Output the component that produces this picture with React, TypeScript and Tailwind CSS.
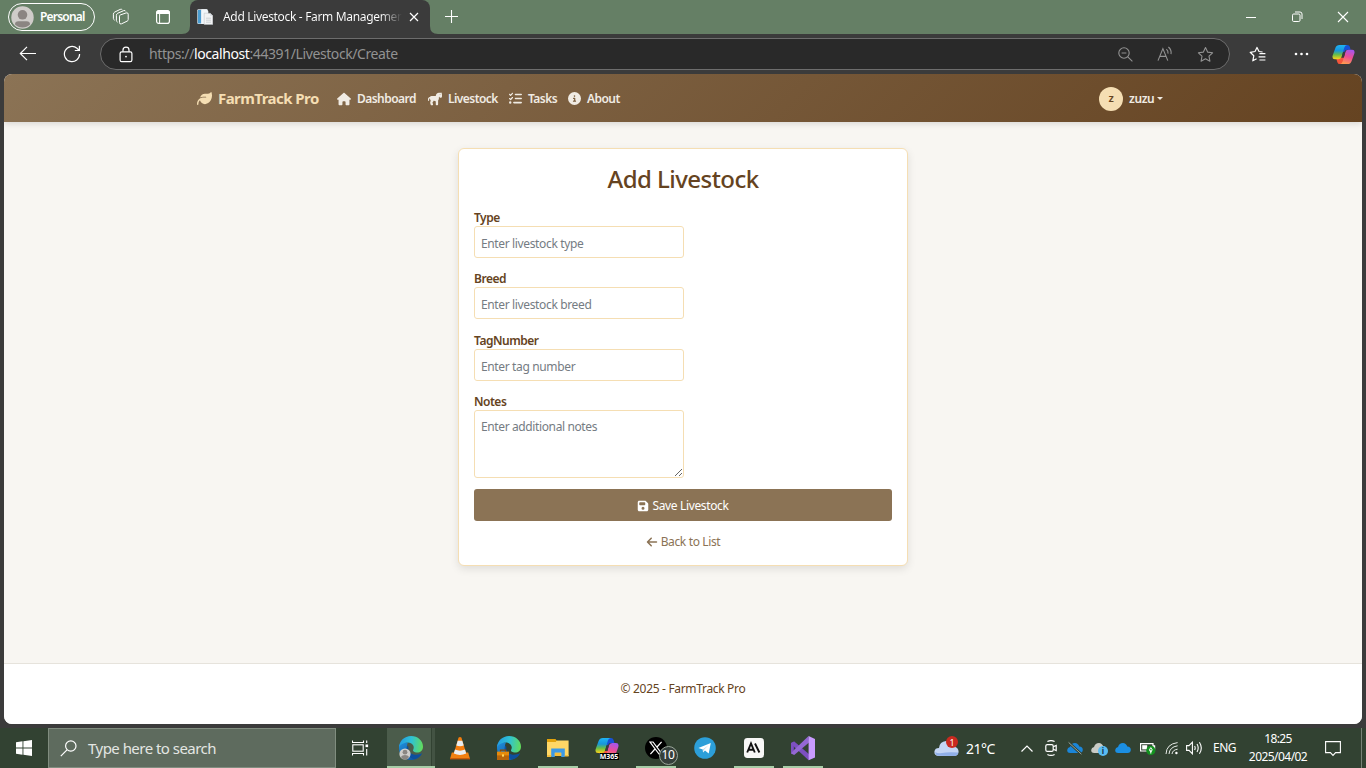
import React from "react";
import {
  FaArrowLeft,
  FaCircleInfo,
  FaFloppyDisk,
  FaHorse,
  FaHouse,
  FaLeaf,
  FaListCheck,
} from "react-icons/fa6";

type IconProps = { className?: string };

function WorkspacesIcon() {
  return (
    <svg width="18" height="18" viewBox="0 0 18 18" fill="none" stroke="#fff" strokeWidth="1" strokeLinejoin="round">
      <path d="M7.5 8.2 Q7.5 7.3 8.4 6.9 L14.2 4.9 Q16.2 4.4 16.2 6.2 V11.6 Q16.2 12.7 15.2 13.1 L9.6 15.8 Q7.5 16.6 7.5 14.6 Z" />
      <path d="M5.6 14.2 Q4.4 13.6 4.4 12.4 V7.4 Q4.4 5.9 5.8 5.2 L11.8 2.6 Q13.3 2.2 13.8 3.4" />
      <path d="M2.6 12.2 Q1.4 11.6 1.4 10.4 V6.2 Q1.4 4.7 2.8 4 L8.2 1.4 Q9.6 .9 10.3 1.8" />
    </svg>
  );
}

function VerticalTabsIcon() {
  return (
    <svg width="16" height="16" viewBox="0 0 16 16" fill="none" stroke="#fff" strokeWidth="1.2">
      <rect x="1.6" y="1.6" width="12.8" height="12.8" rx="2.2" />
      <path d="M1.8 4.3 V3.8 Q1.8 1.8 3.8 1.8 H12.2 Q14.2 1.8 14.2 3.8 V4.3 Z" fill="#fff" />
      <path d="M4.6 4.5 V14.2" strokeWidth="1" />
    </svg>
  );
}

function FaviconIcon() {
  return (
    <svg width="16" height="16" viewBox="0 0 16 16">
      <path d="M.3 1.2 Q.3 .2 1.3 .2 H10.5 V15 H1.3 Q.3 15 .3 14 Z" fill="#dfeaf2" />
      <rect x=".9" y="1" width="3.4" height="13.4" fill="#4b9cd0" />
      <path d="M4.3 .2 H9.5 L11.3 2 V15 H4.3 Z" fill="#f2f6f9" />
      <path d="M7.2 4.2 H13.2 L15.8 6.8 V15.6 H7.2 Z" fill="#f2f3f4" stroke="#b9bfc5" strokeWidth=".5" />
      <path d="M9 9.2 H14 M9 11.2 H14 M9 13.2 H14" stroke="#c4c9ce" strokeWidth=".8" />
      <path d="M13 4.2 V7 H15.8" fill="#dce0e4" />
    </svg>
  );
}

const STAR = "M8.5 1.6 L10.6 6.1 L15.6 6.8 L12 10.2 L12.9 15.2 L8.5 12.8 L4.1 15.2 L5 10.2 L1.4 6.8 L6.4 6.1 Z";

function CopilotIcon({ className }: IconProps) {
  return (
    <svg className={className} viewBox="0 0 24 24">
      <defs>
        <linearGradient id="cpA" x1=".3" y1="0" x2=".3" y2="1">
          <stop offset="0" stopColor="#1fb4f4" />
          <stop offset=".4" stopColor="#1796dc" />
          <stop offset=".68" stopColor="#69bd45" />
          <stop offset="1" stopColor="#ffd31a" />
        </linearGradient>
        <linearGradient id="cpB" x1=".7" y1="0" x2=".4" y2="1">
          <stop offset="0" stopColor="#a455ee" />
          <stop offset=".5" stopColor="#ec4d94" />
          <stop offset="1" stopColor="#ff9a50" />
        </linearGradient>
      </defs>
      <path d="M13 2 H16 Q18 2 18.6 4 L19.4 7 H16 Q13.6 7 12.8 9.4 L10.8 9 Z" fill="#1750d8" />
      <path d="M4.5 16.5 L5.6 20 Q6.2 22 8.2 22 H11 Q12.6 22 13.2 20 L14.2 15 L10 15 Z" fill="#f4553b" />
      <path d="M7.8 2 H15.6 Q13.6 2.3 12.9 4.6 L10.1 14.4 Q9.3 17 6.8 17 H3 Q-.3 17 .7 13 L3.6 5 Q4.7 2 7.8 2 Z" fill="url(#cpA)" />
      <path d="M16.2 22 H8.4 Q10.4 21.7 11.1 19.4 L13.9 9.6 Q14.7 7 17.2 7 H21 Q24.3 7 23.3 11 L20.4 19 Q19.3 22 16.2 22 Z" fill="url(#cpB)" />
      <path d="M13.9 9.6 L12.4 15 H10 L11.6 9.4 Z" fill="#3b3b3b" />
    </svg>
  );
}

function EdgeIcon({ badge }: { badge: "profile" | "work" }) {
  return (
    <svg className="size-7" viewBox="0 0 28 28">
      <defs>
        <linearGradient id="edA" x1="0" y1=".4" x2="1" y2=".5">
          <stop offset="0" stopColor="#229be4" />
          <stop offset=".5" stopColor="#2fc2d4" />
          <stop offset="1" stopColor="#62dc5c" />
        </linearGradient>
        <linearGradient id="edB" x1="0" y1="0" x2="1" y2="1">
          <stop offset="0" stopColor="#2090dc" />
          <stop offset="1" stopColor="#0b4a98" />
        </linearGradient>
      </defs>
      <path d="M2 14 C2 8 6 7 11 8.6 C9 12 10 17 13.6 19.4 C17.4 21.8 21.6 21 25 19.2 C22.8 23.6 18.6 26 14 26 C7 26 2 21 2 14 Z" fill="url(#edB)" />
      <path d="M10 12 C8.4 17.5 11.4 24.6 18 25.3 C21 24.2 23.6 22 25 19.2 C21.6 21 17.4 21.8 13.8 19.2 C11.8 17.6 11 15.4 11.4 12.6 Z" fill="#0d4f9e" />
      <path d="M2 13.6 C2.2 7 7.4 2 14 2 C21 2 26 7 26 12.4 C26 17 22.5 19 19 18.4 C16.6 18 15.4 17 16.2 15.8 C18 12.6 15.5 8.6 10.8 8.6 C6.4 8.6 3 11 2 13.6 Z" fill="url(#edA)" />
      {badge === "profile" ? (
        <g>
          <circle cx="8" cy="20" r="5.6" fill="#cfcdcb" />
          <circle cx="8" cy="18.2" r="2.4" fill="#8a8683" />
          <path d="M3.9 23 Q5 21 8 21 T12.1 23 Q10.5 25.6 8 25.6 T3.9 23 Z" fill="#8a8683" />
        </g>
      ) : (
        <g>
          <path d="M5.5 18 V16.2 H10.5 V18" fill="none" stroke="#8a4a05" strokeWidth="1.2" />
          <rect x="2" y="17.6" width="12" height="8.4" fill="#e58a0b" />
          <rect x="2" y="21.4" width="12" height="4.6" fill="#b8650a" />
          <rect x="7" y="20.4" width="2" height="2.2" fill="#ffd65a" />
        </g>
      )}
    </svg>
  );
}

function VlcIcon() {
  return (
    <svg className="size-7" viewBox="0 0 28 28">
      <path d="M5.8 18.5 H22.2 L24 25 H4 Z" fill="#f08010" />
      <path d="M4 24 H24 V25.4 H4 Z" fill="#c95a06" />
      <path d="M12.6 3.5 Q14 2.6 15.4 3.5 L20.4 20 Q18 22.2 14 22.2 T7.6 20 Z" fill="#f47d0e" />
      <path d="M11.7 6.8 H16.3 L17.7 11.4 Q14 13 10.3 11.4 Z" fill="#e9edef" />
      <path d="M9 15.6 Q14 17.8 19 15.6 L20.2 19.6 Q14 22.2 7.8 19.6 Z" fill="#e9edef" />
    </svg>
  );
}

function ExplorerIcon() {
  return (
    <svg className="size-7" viewBox="0 0 28 28">
      <path d="M3 5 H11 L13.2 7.2 H3 Z" fill="#dd9a06" />
      <path d="M3 7.4 H11.4 L13 6.4 H24.6 V22 H3 Z" fill="#ffd766" />
      <path d="M3 5 H11.2 L12.8 6.4 L11.4 8 H3 Z" fill="#e3a30c" />
      <path d="M7.2 14.6 H20.8 V23 H17.2 V18.8 H10.8 V23 H7.2 Z" fill="#3b99e6" />
      <path d="M3 21 H7.2 V23 H3 Z M10.8 18.8 H17.2 V22 H10.8 Z M20.8 21 H24.6 V22.4 H20.8 Z" fill="#f4be3d" />
    </svg>
  );
}

function VisualStudioIcon() {
  return (
    <svg className="size-7" viewBox="0 0 28 28">
      <path fillRule="evenodd" d="M2 9 L5 7.6 L20 20 V26 L5.2 13 L4.6 17.4 L2 19 Z" fill="#6a3fb0" />
      <path d="M2 9 L5.2 7.6 L19.8 20.4 L19.6 26.2 L4.4 11.8 V16.4 L2 19 Z" fill="#7d50c0" />
      <path d="M2 19 L4.4 16.4 L19.6 2 L20 8.6 L5.2 21 L2 19.6 Z" fill="#9468d4" />
      <path d="M19.6 2 L26 5 V23.6 L19.6 26.2 V2 Z" fill="#c99bff" />
    </svg>
  );
}

function TaskSlot({ active, children }: { active?: boolean; children: React.ReactNode }) {
  return (
    <div className="flex w-[49px] justify-center">
      <div
        className={
          active
            ? "flex h-10 w-10 items-center justify-center border-b-2 border-[#a7cda7] pt-0.5"
            : "flex h-10 w-10 items-center justify-center"
        }
      >
        {children}
      </div>
    </div>
  );
}

function Cloud({ fill, className }: { fill: string; className?: string }) {
  return (
    <svg className={className} viewBox="0 0 16 11">
      <path d="M3.2 10.5 Q0 10.3 .2 7.4 Q.5 5 3 4.6 Q4.2 .6 8 .6 Q11 .7 12.3 4 Q15.8 4.4 15.8 7.4 Q15.6 10.4 12.6 10.5 Z" fill={fill} />
    </svg>
  );
}

function TabBar() {
  return (
    <header className="flex h-[34px] bg-[#657f65] text-white">
      <div className="flex w-[190px] items-center pl-2">
        <div className="flex h-[28px] w-[87px] items-center rounded-full border border-white pl-0.5">
          <svg className="size-[23px]" viewBox="0 0 23 23">
            <circle cx="11.5" cy="11.5" r="11.2" fill="#cfccc9" />
            <circle cx="11.5" cy="8.8" r="4.8" fill="#8b8582" />
            <path d="M4 18.4 Q4 15.2 7.4 15.2 H15.6 Q19 15.2 19 18.4 Q16 21.4 11.5 21.4 T4 18.4 Z" fill="#8b8582" />
          </svg>
          <span className="ml-[6px] text-[12px] font-semibold tracking-[-0.8px]">Personal</span>
        </div>
        <div className="ml-[17px] flex">
          <WorkspacesIcon />
        </div>
        <div className="ml-[25px]">
          <VerticalTabsIcon />
        </div>
      </div>
      <div className="relative flex w-[240px] items-center rounded-t-lg bg-[#3b3b3b] pl-[7px]">
        <svg className="absolute bottom-0 -left-2 size-2" viewBox="0 0 8 8">
          <path d="M8 0 V8 H0 Q8 8 8 0 Z" fill="#3b3b3b" />
        </svg>
        <svg className="absolute -right-2 bottom-0 size-2" viewBox="0 0 8 8">
          <path d="M0 0 V8 H8 Q0 8 0 0 Z" fill="#3b3b3b" />
        </svg>
        <FaviconIcon />
        <span className="ml-[10px] w-[179px] overflow-hidden bg-linear-to-r from-white from-88% to-transparent bg-clip-text text-[12px] tracking-[-0.33px] whitespace-nowrap text-transparent">
          Add Livestock - Farm Management
        </span>
        <svg className="ml-[7px] size-[10px]" viewBox="0 0 10 10" stroke="#fff" strokeWidth="1.2">
          <path d="M1 1 L9 9 M9 1 L1 9" />
        </svg>
      </div>
      <div className="flex flex-1 items-center pl-[15px]">
        <svg className="size-[14px]" viewBox="0 0 14 14" stroke="#fff" strokeWidth="1.1">
          <path d="M6.5 0 V13 M0 6.5 H13" />
        </svg>
      </div>
      <div className="flex w-[138px] items-center justify-around">
        <svg className="size-[12px]" viewBox="0 0 12 12" stroke="#fff">
          <path d="M1 6.5 H11" />
        </svg>
        <svg className="size-[12px]" viewBox="0 0 12 12" stroke="#fff" fill="none">
          <rect x="1.5" y="3" width="7.5" height="7.5" rx="1.2" />
          <path d="M4 1 H9 Q11 1 11 3 V8" />
        </svg>
        <svg className="size-[12px]" viewBox="0 0 12 12" stroke="#fff" strokeWidth="1.1">
          <path d="M1 1 L11 11 M11 1 L1 11" />
        </svg>
      </div>
    </header>
  );
}

function Toolbar() {
  return (
    <div className="flex h-10 items-center bg-[#3b3b3b] pl-[19px]">
      <svg width="18" height="16" viewBox="0 0 18 16" fill="none" stroke="#fff" strokeWidth="1.2">
        <path d="M17 7.5 H1.4 M8 .8 L1.3 7.5 L8 14.2" />
      </svg>
      <svg className="ml-[26px]" width="18" height="18" viewBox="0 0 18 18" fill="none" stroke="#fff" strokeWidth="1.2">
        <path d="M16.6 9 A7.6 7.6 0 1 1 14 3.3 L16 5.2 M16.4 .8 V5.5 H11.8" />
      </svg>
      <div className="ml-[19px] flex h-8 w-[1130px] items-center rounded-full border border-[#6d6d6d] bg-[#292929]">
        <svg className="ml-[18px]" width="14" height="17" viewBox="0 0 14 17" fill="none" stroke="#fff" strokeWidth="1.2">
          <rect x="1.1" y="5.8" width="11.8" height="9.8" rx="1.6" />
          <path d="M4 5.8 V4 Q4 1.2 7 1.2 T10 4 V5.8" />
          <circle cx="7" cy="10.6" r=".9" fill="#fff" stroke="none" />
        </svg>
        <div className="ml-4 flex-1 pb-px text-[14px] tracking-[-0.41px] whitespace-nowrap text-[#929292]">
          https://<span className="text-white">localhost</span>:44391/Livestock/Create
        </div>
        <div className="flex w-24 items-center justify-between">
          <svg width="15" height="15" viewBox="0 0 15 15" fill="none" stroke="#929292" strokeWidth="1.1">
            <circle cx="6" cy="6" r="5.2" />
            <path d="M9.8 9.8 L14.4 14.4 M3.6 6 H8.4" />
          </svg>
          <svg width="17" height="16" viewBox="0 0 17 16" fill="none" stroke="#929292" strokeWidth="1.1">
            <path d="M1 14.6 L5.9 2.6 L10.8 14.6 M2.8 10.4 H9 M9.4 3.2 Q11.4 5 11 7.6 M11.4 1 Q14.8 3.8 14 8.2" />
          </svg>
          <svg width="17" height="17" viewBox="0 0 17 17" fill="none" stroke="#929292" strokeWidth="1.1" strokeLinejoin="round">
            <path d={STAR} />
          </svg>
        </div>
        <div className="w-[15px]" />
      </div>
      <svg className="ml-[19px]" width="17" height="17" viewBox="0 0 17 17" fill="none" stroke="#fff" strokeWidth="1.2" strokeLinejoin="round">
        <path d="M13.6 6 L10 5.5 L8 1.4 L6 5.5 L1.2 6.3 L4.8 9.8 L3.8 14.8 L7.6 12.8 M10.4 7.6 H16.4 M9.6 10.8 H16.4 M10.4 14 H16.4" />
      </svg>
      <svg className="ml-[28px]" width="15" height="4" viewBox="0 0 15 4" fill="#fff">
        <circle cx="2" cy="2" r="1.3" />
        <circle cx="7.5" cy="2" r="1.3" />
        <circle cx="13" cy="2" r="1.3" />
      </svg>
      <CopilotIcon className="ml-[23px] size-[23px]" />
    </div>
  );
}

function Navbar() {
  return (
    <nav className="relative flex h-12 items-center bg-linear-135 from-[#8b7355] to-[#654321] pt-px pl-[193px] text-[12px] font-semibold tracking-[-0.55px] text-[#f0ebe3] shadow-[0_2px_6px_rgba(0,0,0,0.12)]">
      <a className="flex w-[140px] items-center text-[15px] font-bold text-[#f5deb3]">
        <FaLeaf className="size-[15px]" />
        <span className="ml-[6px] pb-px">FarmTrack Pro</span>
      </a>
      <a className="flex w-[91px] items-center">
        <FaHouse className="size-[14px]" />
        <span className="ml-[6px]">Dashboard</span>
      </a>
      <a className="flex w-[81px] items-center">
        <FaHorse className="size-[14px]" />
        <span className="ml-[6px]">Livestock</span>
      </a>
      <a className="flex w-[59px] items-center">
        <FaListCheck className="size-[13px]" />
        <span className="ml-[6px]">Tasks</span>
      </a>
      <a className="flex flex-1 items-center">
        <FaCircleInfo className="size-[13px]" />
        <span className="ml-[6px]">About</span>
      </a>
      <div className="flex w-[263px] items-center">
        <span className="flex size-6 items-center justify-center rounded-full bg-[#f5deb3] text-[11px] text-[#654321]">z</span>
        <span className="ml-[6px] tracking-[-0.4px]">zuzu</span>
        <svg className="ml-[3px]" width="6" height="3" viewBox="0 0 6 3">
          <path d="M0 0 H6 L3 3 Z" fill="#f0ebe3" />
        </svg>
      </div>
    </nav>
  );
}

const inputClass =
  "block h-8 w-[210px] rounded-[3px] border border-[#f5deb3] bg-white px-1.5 pt-0.5 text-[12px] tracking-[-0.36px] outline-none placeholder:text-[#757c83]";

function Field({ label, placeholder, className }: { label: string; placeholder: string; className: string }) {
  return (
    <div className={className}>
      <label className="block h-[17px] text-[12px] leading-[17px] font-semibold tracking-[-0.48px]">{label}</label>
      <input className={inputClass} placeholder={placeholder} />
    </div>
  );
}

function AppPage() {
  return (
    <div className="flex h-[654px] flex-col bg-[#3b3b3b] px-1 pb-1">
      <div className="flex flex-1 flex-col overflow-hidden rounded-lg bg-[#f8f6f2] text-[#654321]">
        <Navbar />
        <main className="flex flex-1 justify-center pt-[26px]">
          <section className="h-[418px] w-[450px] rounded-md border border-[#f5deb3] bg-white px-[15px] shadow-[0_3px_9px_rgba(0,0,0,0.1)]">
            <h1 className="mt-[14px] mb-[15px] h-[31px] text-center text-[24px] leading-[31px] font-medium tracking-[-0.55px]">Add Livestock</h1>
            <Field className="h-[61px]" label="Type" placeholder="Enter livestock type" />
            <Field className="h-[62px]" label="Breed" placeholder="Enter livestock breed" />
            <Field className="h-[61px]" label="TagNumber" placeholder="Enter tag number" />
            <label className="block h-[17px] text-[12px] leading-[17px] font-semibold tracking-[-0.48px]">Notes</label>
            <textarea
              className="block h-[68px] w-[210px] rounded-[3px] border border-[#f5deb3] bg-white px-1.5 pt-[7px] text-[12px] leading-[18px] tracking-[-0.38px] outline-none placeholder:text-[#757c83]"
              placeholder="Enter additional notes"
            />
            <button className="mt-[11px] flex h-8 w-full items-center justify-center rounded-[3px] bg-[#8b7355] pt-0.5 text-[12px] tracking-[-0.36px] text-white">
              <FaFloppyDisk className="mr-[3px] size-[12px]" />
              Save Livestock
            </button>
            <a className="mt-[12px] flex h-[18px] items-center justify-center text-[12px] tracking-[-0.36px] text-[#8b7355]">
              <FaArrowLeft className="mr-[3px] size-[12px]" />
              Back to List
            </a>
          </section>
        </main>
        <footer className="flex h-[61px] justify-center border-t border-[#e6e3dc] bg-white pt-4 text-[12px] leading-[18px] tracking-[-0.32px]">
          © 2025 - FarmTrack Pro
        </footer>
      </div>
    </div>
  );
}

function Taskbar() {
  return (
    <footer className="flex h-10 items-center bg-[#324232] text-white">
      <div className="flex w-12 justify-center">
        <svg width="16" height="16" viewBox="0 0 16 16" fill="#fff">
          <path d="M0 2.2 L6.5 1.3 V7.5 H0 Z M7.4 1.2 L16 0 V7.5 H7.4 Z M0 8.4 H6.5 V14.7 L0 13.8 Z M7.4 8.4 H16 V16 L7.4 14.8 Z" />
        </svg>
      </div>
      <div className="flex h-10 w-[288px] items-center border border-[#808d7f] bg-[#5e6b5e] pl-[11px] text-[15px] tracking-[-0.53px] text-[#e3e6e3]">
        <svg width="17" height="17" viewBox="0 0 17 17" fill="none" stroke="#fff" strokeWidth="1.2">
          <circle cx="10.8" cy="6" r="5.2" />
          <path d="M7 9.8 L.8 16.2" />
        </svg>
        <span className="ml-[11px]">Type here to search</span>
      </div>
      <div className="flex w-[51px] justify-center pr-0.5">
        <svg width="17" height="16" viewBox="0 0 17 16" fill="none" stroke="#fff" strokeWidth="1.1">
          <path d="M.5 .5 V2.5 H11.5 V.5 M.5 15.5 V13.5 H11.5 V15.5 M14.7 .5 V3 M14.7 9 V15.5" />
          <rect x=".8" y="4.8" width="10.4" height="6.4" />
          <rect x="13.5" y="4.5" width="2.6" height="2.6" fill="#fff" stroke="none" />
        </svg>
      </div>
      <div className="flex h-10 w-12 border-b-2 border-[#a7cda7]">
        <div className="flex w-11 items-center justify-center bg-[#4b5c4b] pt-0.5 pl-1">
          <EdgeIcon badge="profile" />
        </div>
        <div className="ml-px w-[3px] bg-[#435343]" />
      </div>
      <TaskSlot>
        <VlcIcon />
      </TaskSlot>
      <TaskSlot>
        <EdgeIcon badge="work" />
      </TaskSlot>
      <TaskSlot active>
        <ExplorerIcon />
      </TaskSlot>
      <TaskSlot>
        <div className="relative size-6">
          <CopilotIcon className="size-6" />
          <span className="absolute top-[17px] left-[5px] flex h-[7px] w-[19px] items-center justify-center bg-black text-[7px] leading-none font-bold">M365</span>
        </div>
      </TaskSlot>
      <TaskSlot active>
        <div className="relative size-[22px] rounded-full bg-black">
          <svg className="absolute top-1 left-1 size-[14px]" viewBox="0 0 14 14" fill="none" stroke="#fff" strokeWidth="1.2">
            <path d="M1 1 H4 L13 13 H10 Z M12.6 .8 L8 6 M6 8 L1.4 13.2" />
          </svg>
          <span className="absolute top-[9px] left-[14px] flex size-[19px] items-center justify-center rounded-full border border-[#9aa69a] bg-[#35403b] pb-px text-[12px] leading-none tracking-[-0.4px]">10</span>
        </div>
      </TaskSlot>
      <TaskSlot>
        <svg className="size-[22px]" viewBox="0 0 22 22">
          <circle cx="11" cy="11" r="10.8" fill="#2c9fd9" />
          <path d="M4.4 10.9 L16.8 6 L14.7 16.4 L11 13.6 L9 15.6 L8.8 12.4 Z" fill="#fff" />
          <path d="M8.8 12.4 L14.4 8.2 L9.8 13 L9 15.6 Z" fill="#bcd9ea" />
        </svg>
      </TaskSlot>
      <TaskSlot active>
        <svg className="size-5" viewBox="0 0 20 20">
          <rect width="20" height="20" rx="3.4" fill="#f8f8f7" />
          <path d="M3.2 14.5 L7 5.5 L10.8 14.5 M4.6 11.7 H9.4 M11 5.5 L15.4 14.5" fill="none" stroke="#111" strokeWidth="1.9" />
        </svg>
      </TaskSlot>
      <TaskSlot active>
        <VisualStudioIcon />
      </TaskSlot>
      <div className="ml-auto flex h-10 w-[435px] items-center">
        <div className="relative ml-[3px] w-[27px]">
          <svg className="h-[18px] w-[25px]" viewBox="0 0 25 18">
            <path d="M5 17 Q0 16.8 .4 12.4 Q1 9 5 9 Q5.6 2.5 12 2 Q17.4 2 18.8 7.4 Q24.6 8 24.6 12.6 Q24.4 16.8 20.4 17 Z" fill="#c4d6f5" />
            <path d="M4 16.8 Q1 15.8 1.4 13 Q3.4 15 8 14 Q14 12.8 24.4 13.6 Q23.8 17 20.4 17 Z" fill="#90b0e8" />
          </svg>
          <span className="absolute -top-[3px] left-3 flex size-3 items-center justify-center rounded-full bg-[#ca2a20] text-[9px] leading-none">1</span>
        </div>
        <span className="ml-[5px] w-[55px] text-[14px] tracking-[-0.5px]">21°C</span>
        <svg width="12" height="7" viewBox="0 0 12 7" fill="none" stroke="#fff" strokeWidth="1.2">
          <path d="M.5 6.5 L6 1 L11.5 6.5" />
        </svg>
        <svg className="ml-[12px]" width="12" height="16" viewBox="0 0 12 16" fill="none" stroke="#fff" strokeWidth="1.2">
          <rect x=".8" y="4.6" width="7.4" height="6.8" rx="1.4" />
          <path d="M8.2 6.8 L11.2 5.4 V10.6 L8.2 9.2 M2.4 1.6 Q6 -.4 9.6 1.6 M2.4 14.4 Q6 16.4 9.6 14.4" />
        </svg>
        <div className="relative ml-[10px] size-4">
          <Cloud fill="#1b86d8" className="mt-0.5 h-3 w-4" />
          <svg className="absolute top-0 left-0 size-4" viewBox="0 0 16 16">
            <path d="M1.6 2.4 L14.4 14.2" stroke="#324232" strokeWidth="2.6" />
            <path d="M1.6 2.4 L14.4 14.2" stroke="#9aa59b" strokeWidth="1" />
          </svg>
        </div>
        <div className="relative ml-2 size-4">
          <Cloud fill="#c9cbc5" className="mt-0.5 h-3 w-4" />
          <span className="absolute top-[6px] left-[7px] flex size-[10px] items-center justify-center rounded-full bg-[#59bdf2] text-[8px] leading-none font-bold text-[#12324a]">i</span>
        </div>
        <div className="ml-2 size-4">
          <Cloud fill="#1b8fe2" className="mt-0.5 h-3 w-4" />
        </div>
        <svg className="ml-[9px]" width="16" height="16" viewBox="0 0 16 16">
          <path d="M.6 3.6 H13 V11 H.6 Z M13 5.8 H14.6 V8.8 H13" fill="none" stroke="#fff" strokeWidth="1.2" />
          <rect x="2.2" y="5.2" width="5" height="4.2" fill="#fff" />
          <circle cx="10.8" cy="10.4" r="4.6" fill="#13921f" />
          <path d="M10.8 7.6 Q13.6 9.8 10.8 12.2 Q8 9.8 10.8 7.6 M10.8 9.8 V13.6" fill="none" stroke="#fff" strokeWidth="1" />
        </svg>
        <svg className="ml-[9px]" width="14" height="14" viewBox="0 0 14 14" fill="none" stroke="#e8ece8" strokeWidth="1">
          <path d="M1 13 Q1.4 3 12.6 1.6 M4 13 Q4.6 6 12.6 4.8 M7 13 Q7.6 8.8 12.6 8.2" />
          <circle cx="11.4" cy="12" r="1.2" fill="#fff" stroke="none" />
        </svg>
        <svg className="ml-[7px]" width="17" height="14" viewBox="0 0 17 14" fill="none" stroke="#fff" strokeWidth="1.1">
          <path d="M.6 4.6 H3 L6.4 1.2 V12.8 L3 9.4 H.6 Z M8.6 5 Q9.8 7 8.6 9 M11 3 Q13.4 7 11 11 M13.4 1.2 Q17.2 7 13.4 12.8" />
        </svg>
        <span className="ml-[10px] w-[33px] text-[12px] tracking-[-0.5px]">ENG</span>
        <div className="flex w-[64px] flex-col items-center text-[12px] leading-[18px] tracking-[-0.6px]">
          <span>18:25</span>
          <span className="tracking-[-0.55px]">2025/04/02</span>
        </div>
        <svg className="ml-[15px]" width="16" height="17" viewBox="0 0 16 17" fill="none" stroke="#fff" strokeWidth="1.1">
          <path d="M.6 1.6 H15.4 V12.6 H10.6 L8 15.4 L5.4 12.6 H.6 Z" />
        </svg>
        <div className="ml-auto h-10 w-[5px] border-l border-[#778377]" />
      </div>
    </footer>
  );
}

export default function App() {
  return (
    <div className="h-[768px] w-[1366px] overflow-hidden font-['Noto_Sans','Open_Sans',sans-serif]">
      <TabBar />
      <Toolbar />
      <AppPage />
      <Taskbar />
    </div>
  );
}
